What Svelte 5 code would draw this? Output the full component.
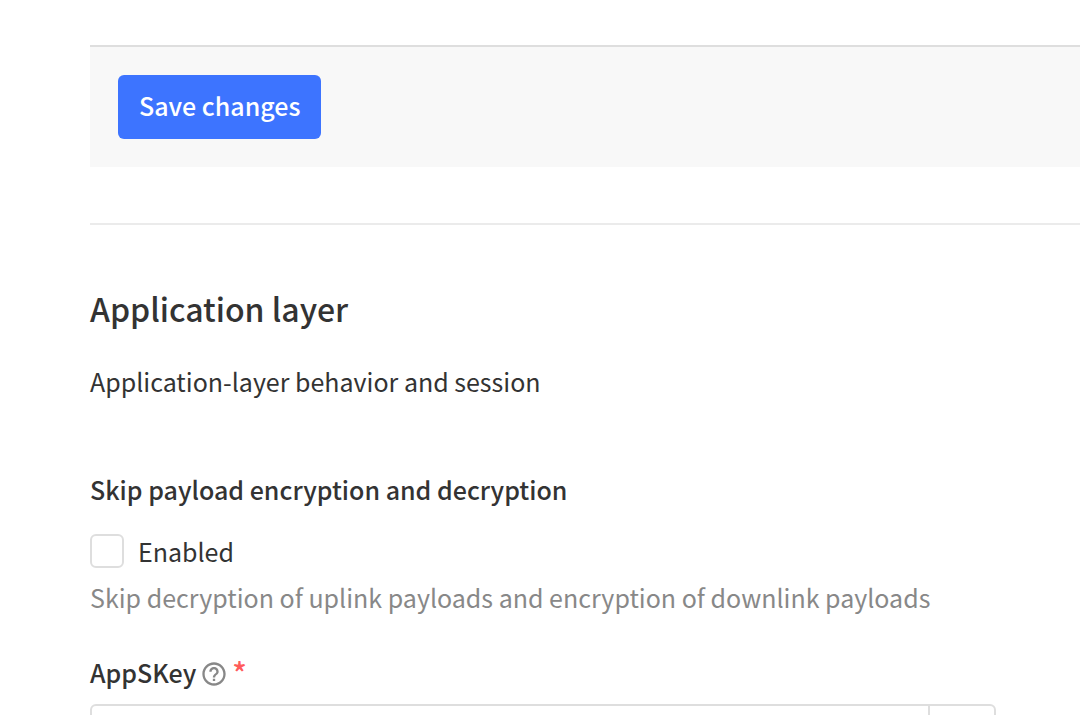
<script lang="ts">
  let skipCrypto = false;
  let appSKey = "";
</script>

<main>
  <form id="device-form" on:submit|preventDefault>
    <div class="submit-bar">
      <button type="submit" class="save">Save changes</button>
    </div>

    <hr />

    <h2>Application layer</h2>
    <p class="intro">Application-layer behavior and session</p>

    <fieldset class="field">
      <legend>Skip payload encryption and decryption</legend>
      <label class="check">
        <input
          type="checkbox"
          bind:checked={skipCrypto}
          aria-describedby="skip-hint"
        />
        <span>Enabled</span>
      </label>
      <p class="hint" id="skip-hint">
        Skip decryption of uplink payloads and encryption of downlink payloads
      </p>
    </fieldset>

    <div class="field">
      <div class="title">
        <label for="app-s-key">AppSKey</label>
        <svg viewBox="0 0 24 24" aria-hidden="true">
          <path
            d="M11 18h2v-2h-2v2zm1-16C6.48 2 2 6.48 2 12s4.48 10 10 10 10-4.48 10-10S17.52 2 12 2zm0 18c-4.41 0-8-3.59-8-8s3.59-8 8-8 8 3.59 8 8-3.59 8-8 8zm0-14c-2.21 0-4 1.79-4 4h2c0-1.1.9-2 2-2s2 .9 2 2c0 2-3 1.75-3 5h2c0-2.25 3-2.5 3-5 0-2.21-1.79-4-4-4z"
          />
        </svg>
        <span class="required">*</span>
      </div>
      <div class="key-input">
        <input id="app-s-key" type="text" bind:value={appSKey} required />
        <button type="button" aria-label="Toggle visibility"></button>
      </div>
    </div>
  </form>
</main>

<style>
  :global(body) {
    background: #fff;
    overflow: hidden;
  }

  main {
    padding: 45px 0 0 90px;
    font-family: "Noto Sans CJK SC", "Noto Sans", sans-serif;
    font-size: 25px;
    line-height: 36px;
    color: #333;
  }

  .submit-bar {
    padding: 28px;
    background: #f8f8f8;
    border-top: 2px solid #dedede;
  }

  button {
    font: inherit;
    cursor: pointer;
  }

  .save {
    display: block;
    height: 64px;
    padding: 0 21px 4px;
    border: 0;
    border-radius: 6px;
    background: #3d74ff;
    color: #fff;
    font-weight: 500;
  }

  hr {
    margin: 56px 0 0;
    border: 0;
    border-top: 2px solid #ebebeb;
  }

  h2 {
    margin: 61px 0 0;
    font-size: 32px;
    line-height: 44px;
    font-weight: 500;
  }

  .intro {
    margin: 33px 0 72px;
  }

  .field {
    margin: 0 0 39px;
    padding: 0;
    border: 0;
    min-width: 0;
  }

  legend,
  .title {
    padding: 0;
    font-weight: 500;
  }

  .check {
    display: flex;
    align-items: center;
    gap: 14px;
    margin-top: 26px;
  }

  .check input {
    appearance: none;
    width: 34px;
    height: 34px;
    margin: 0;
    border: 2px solid #dedede;
    border-radius: 6px;
    background: #fff;
  }

  .check input:checked {
    background: #3d74ff;
  }

  .hint {
    margin: 10px 0 0;
    color: #888;
  }

  .title {
    display: flex;
    align-items: center;
    gap: 4px;
  }

  .title svg {
    width: 28px;
    height: 28px;
    margin-top: 4px;
    fill: #888;
  }

  .required {
    color: #ff5b5b;
    font-size: 30px;
  }

  .key-input {
    display: flex;
    height: 64px;
    max-width: 906px;
    margin-top: 14px;
    box-sizing: border-box;
    border: 2px solid #dedede;
    border-radius: 6px;
  }

  .key-input input {
    flex: 1;
    min-width: 0;
    padding: 0 16px;
    border: 0;
    background: none;
    font: inherit;
  }

  .key-input button {
    width: 66px;
    border: 0;
    border-left: 2px solid #dedede;
    background: none;
  }
</style>
